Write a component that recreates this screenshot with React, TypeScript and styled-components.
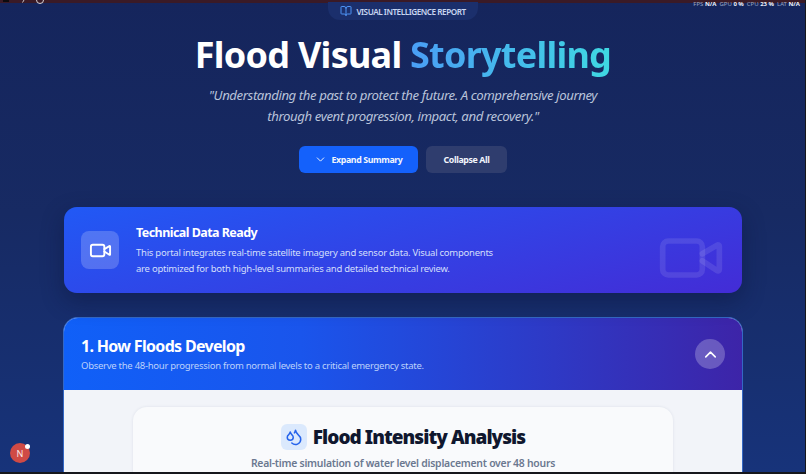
import styled, { createGlobalStyle } from "styled-components"
import { BookOpen, ChevronDown, ChevronUp, Droplets, Video } from "lucide-react"

const GlobalStyle = createGlobalStyle`
  html, body {
    margin: 0;
    padding: 0;
    height: 474px;
    overflow: hidden;
    background: #16171c;
    font-family: "Noto Sans", "Open Sans", sans-serif;
  }
  * { box-sizing: border-box; }
`

const Screen = styled.div`
  position: relative;
  width: 805px;
  height: 472px;
  overflow: hidden;
  background: linear-gradient(180deg, #15255c 0%, #172a63 45%, #17337a 100%);
  display: flex;
  flex-direction: column;
`

const TopStrip = styled.div`
  flex: none;
  height: 3px;
  background: #3a1a26;
`

const StripMarks = styled.svg`
  position: absolute;
  top: 0;
  left: 0;
  overflow: visible;
`

const Stats = styled.div`
  position: absolute;
  top: 0;
  right: 5px;
  display: flex;
  gap: 3px;
  font-size: 6px;
  line-height: 8px;
  color: #9aa6c4;
`

const StatValue = styled.b`
  color: #eef1f8;
  font-weight: 700;
`

const Page = styled.main`
  flex: 1;
  min-height: 0;
  display: flex;
  flex-direction: column;
  align-items: center;
  padding: 0 63px 0 64px;
`

const Badge = styled.div`
  flex: none;
  display: flex;
  align-items: center;
  justify-content: center;
  gap: 4px;
  width: 150px;
  height: 18px;
  margin-top: -1px;
  border-radius: 0 0 12px 12px;
  background: #1b2f6c;
  color: #c9d6f2;
  font-size: 8.2px;
  font-weight: 600;
  letter-spacing: -0.48px;
  svg { color: #4f94f5; }
`

const Title = styled.h1`
  margin: 12px 0 0;
  font-size: 36px;
  line-height: 46px;
  font-weight: 700;
  letter-spacing: -0.75px;
  color: #ffffff;
`

const TitleAccent = styled.span`
  background: linear-gradient(90deg, #4a9ef5 0%, #3fd8e2 100%);
  -webkit-background-clip: text;
  background-clip: text;
  color: transparent;
`

const Lead = styled.p`
  margin: 7px 0 0;
  width: 420px;
  text-align: center;
  font-size: 13.2px;
  line-height: 21px;
  font-style: italic;
  font-weight: 400;
  letter-spacing: -0.41px;
  color: #b9c3da;
`

const Actions = styled.div`
  display: flex;
  gap: 8px;
  margin-top: 19px;
`

const Button = styled.button<{ $primary?: boolean }>`
  display: flex;
  align-items: center;
  justify-content: center;
  gap: 4px;
  width: ${(p) => (p.$primary ? "119px" : "81px")};
  height: 27px;
  border: 0;
  border-radius: 6px;
  padding: 0;
  font-family: inherit;
  font-size: 8.8px;
  font-weight: 700;
  letter-spacing: -0.38px;
  color: #f2f5fc;
  background: ${(p) => (p.$primary ? "#1461fb" : "#2f3d6e")};
`

const InfoCard = styled.section`
  position: relative;
  flex: none;
  width: 100%;
  height: 86px;
  margin-top: 34px;
  padding: 0 17px;
  display: flex;
  align-items: center;
  gap: 17px;
  overflow: hidden;
  border-radius: 13px;
  background: linear-gradient(165deg, #2159f5 0%, #432cd6 100%);
  box-shadow: 0 8px 22px rgba(10, 20, 60, 0.45);
`

const InfoIcon = styled.div`
  flex: none;
  width: 38px;
  height: 38px;
  display: flex;
  align-items: center;
  justify-content: center;
  border-radius: 8px;
  background: rgba(255, 255, 255, 0.2);
  color: #fff;
`

const InfoTitle = styled.h2`
  margin: 0 0 3px;
  font-size: 12.5px;
  line-height: 18px;
  font-weight: 700;
  letter-spacing: -0.55px;
  color: #fff;
`

const InfoText = styled.p`
  margin: 0;
  width: 365px;
  font-size: 9.5px;
  line-height: 15.5px;
  letter-spacing: -0.25px;
  color: #d3dffb;
`

const GhostIcon = styled.div`
  position: absolute;
  top: 17px;
  right: 17px;
  color: rgba(255, 255, 255, 0.1);
`

const Panel = styled.section`
  flex: none;
  width: 680px;
  margin: 24px -1px 0;
  border-radius: 15px 15px 0 0;
  border: 1px solid #3468c4;
  border-bottom: 0;
  overflow: hidden;
  background: #f2f4f9;
  height: 160px;
`

const PanelHeader = styled.header`
  height: 72px;
  padding: 0 17px;
  display: flex;
  align-items: center;
  justify-content: space-between;
  background: linear-gradient(90deg, #1060f8 0%, #1a55ec 35%, #3d24a8 100%);
`

const PanelTitle = styled.h2`
  margin: 0 0 2px;
  font-size: 16px;
  line-height: 22px;
  font-weight: 700;
  letter-spacing: -0.68px;
  color: #fff;
`

const PanelSub = styled.p`
  margin: 0;
  font-size: 9.5px;
  line-height: 14px;
  letter-spacing: -0.27px;
  color: #bcd1fb;
`

const RoundButton = styled.button`
  width: 30px;
  height: 30px;
  padding: 0;
  border: 0;
  border-radius: 50%;
  display: flex;
  align-items: center;
  justify-content: center;
  color: #fff;
  background: rgba(255, 255, 255, 0.24);
`

const PanelBody = styled.div`
  padding: 17px 69px 0;
`

const AnalysisCard = styled.div`
  height: 100px;
  padding-top: 17px;
  border-radius: 14px 14px 0 0;
  background: #f9fafc;
  box-shadow: 0 0 3px rgba(30, 50, 90, 0.1);
  display: flex;
  flex-direction: column;
  align-items: center;
`

const AnalysisHead = styled.div`
  display: flex;
  align-items: center;
  gap: 6px;
`

const DropIcon = styled.div`
  width: 26px;
  height: 26px;
  display: flex;
  align-items: center;
  justify-content: center;
  border-radius: 6px;
  background: #dbe9fd;
  color: #2563eb;
`

const AnalysisTitle = styled.h3`
  margin: 0;
  font-size: 19px;
  line-height: 26px;
  font-weight: 900;
  letter-spacing: -0.95px;
  color: #10172e;
`

const AnalysisSub = styled.p`
  margin: 6px 0 0;
  font-size: 10.4px;
  line-height: 14px;
  font-weight: 600;
  letter-spacing: -0.24px;
  color: #6b7890;
`

const DevBadge = styled.div`
  position: absolute;
  left: 10px;
  bottom: 9px;
  width: 20px;
  height: 20px;
  border-radius: 50%;
  background: #d04a45;
  color: #fbe9e8;
  font-size: 9px;
  display: flex;
  align-items: center;
  justify-content: center;
  &::after {
    content: "";
    position: absolute;
    top: 1px;
    right: 0;
    width: 5px;
    height: 5px;
    border-radius: 50%;
    background: #fff;
  }
`

const stats = [
  ["FPS", "N/A"],
  ["GPU", "0 %"],
  ["CPU", "23 %"],
  ["LAT", "N/A"],
]

export default function App() {
  return (
    <>
      <GlobalStyle />
      <Screen>
        <TopStrip />
        <StripMarks width="60" height="4" viewBox="0 0 60 4" fill="none">
          <rect x="3" y="0" width="6" height="2" fill="#0c0a0e" />
          <path d="M24 0 L22.5 2.5" stroke="#c9c4c8" strokeWidth="1" />
          <path d="M36.5 0 A3.5 3.5 0 0 0 43.5 0" stroke="#d8d4d8" strokeWidth="1" />
        </StripMarks>
        <Stats>
          {stats.map(([label, value]) => (
            <span key={label}>
              {label} <StatValue>{value}</StatValue>
            </span>
          ))}
        </Stats>
        <Page>
          <Badge>
            <BookOpen size={12} />
            VISUAL INTELLIGENCE REPORT
          </Badge>
          <Title>
            Flood Visual <TitleAccent>Storytelling</TitleAccent>
          </Title>
          <Lead>
            "Understanding the past to protect the future. A comprehensive journey through event
            progression, impact, and recovery."
          </Lead>
          <Actions>
            <Button $primary>
              <ChevronDown size={13} strokeWidth={1.75} />
              Expand Summary
            </Button>
            <Button>Collapse All</Button>
          </Actions>
          <InfoCard>
            <InfoIcon>
              <Video size={23} strokeWidth={2} />
            </InfoIcon>
            <div>
              <InfoTitle>Technical Data Ready</InfoTitle>
              <InfoText>
                This portal integrates real-time satellite imagery and sensor data. Visual components
                are optimized for both high-level summaries and detailed technical review.
              </InfoText>
            </div>
            <GhostIcon>
              <Video size={68} strokeWidth={2} />
            </GhostIcon>
          </InfoCard>
          <Panel>
            <PanelHeader>
              <div>
                <PanelTitle>1. How Floods Develop</PanelTitle>
                <PanelSub>Observe the 48-hour progression from normal levels to a critical emergency state.</PanelSub>
              </div>
              <RoundButton>
                <ChevronUp size={19} />
              </RoundButton>
            </PanelHeader>
            <PanelBody>
              <AnalysisCard>
                <AnalysisHead>
                  <DropIcon>
                    <Droplets size={18} />
                  </DropIcon>
                  <AnalysisTitle>Flood Intensity Analysis</AnalysisTitle>
                </AnalysisHead>
                <AnalysisSub>Real-time simulation of water level displacement over 48 hours</AnalysisSub>
              </AnalysisCard>
            </PanelBody>
          </Panel>
        </Page>
        <DevBadge>N</DevBadge>
      </Screen>
    </>
  )
}
